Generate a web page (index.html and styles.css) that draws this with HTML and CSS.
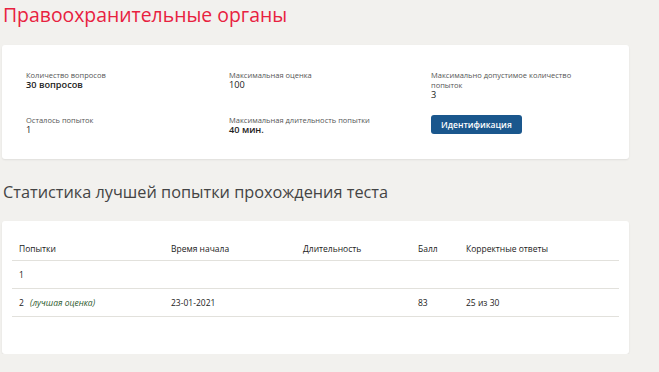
FILE: index.html
```
<!DOCTYPE html>
<html lang="ru">
<head>
    <meta charset="UTF-8">
    <title>Правоохранительные органы</title>
    <link rel="stylesheet" href="styles.css">
</head>
<body>
    <h1 class="page-title">Правоохранительные органы</h1>

    <div class="card info-card">
        <div class="info-grid">
            <div class="info-item">
                <div class="info-label">Количество вопросов</div>
                <div class="info-value bold">30 вопросов</div>
            </div>
            <div class="info-item">
                <div class="info-label">Максимальная оценка</div>
                <div class="info-value">100</div>
            </div>
            <div class="info-item">
                <div class="info-label">Максимально допустимое количество<br>попыток</div>
                <div class="info-value">3</div>
            </div>
            <div class="info-item">
                <div class="info-label">Осталось попыток</div>
                <div class="info-value">1</div>
            </div>
            <div class="info-item">
                <div class="info-label">Максимальная длительность попытки</div>
                <div class="info-value bold">40 мин.</div>
            </div>
            <div class="info-item">
                <button class="btn-primary">Идентификация</button>
            </div>
        </div>
    </div>

    <h2 class="section-title">Статистика лучшей попытки прохождения теста</h2>

    <div class="card table-card">
        <table class="stats">
            <thead>
                <tr>
                    <th class="col-try">Попытки</th>
                    <th class="col-start">Время начала</th>
                    <th class="col-dur">Длительность</th>
                    <th class="col-score">Балл</th>
                    <th>Корректные ответы</th>
                </tr>
            </thead>
            <tbody>
                <tr>
                    <td>1</td>
                    <td></td>
                    <td></td>
                    <td></td>
                    <td></td>
                </tr>
                <tr>
                    <td>2 <span class="best">(лучшая оценка)</span></td>
                    <td>23-01-2021</td>
                    <td></td>
                    <td>83</td>
                    <td>25 из 30</td>
                </tr>
            </tbody>
        </table>
    </div>
</body>
</html>
```

FILE: styles.css
```
body {
    margin: 0;
    padding: 0 30px 0 2px;
    background-color: #f2f1ee;
    font-family: "Open Sans", Arial, sans-serif;
    color: #333;
}
.page-title {
    margin: 0;
    padding: 2px 0 0 1px;
    height: 43px;
    font-size: 19.4px;
    font-weight: 400;
    color: #e8213f;
    line-height: 26px;
}
.card {
    background: #fff;
    border-radius: 3px;
    box-shadow: 0 1px 2px rgba(0,0,0,0.08);
}
.info-card {
    padding: 25px 24px 19px 24px;
    height: 70px;
}
.info-grid {
    display: grid;
    grid-template-columns: 203px 202px 1fr;
    grid-template-rows: 45px 25px;
}
.info-label {
    font-size: 7.5px;
    color: #555;
    line-height: 10px;
}
.info-value {
    font-size: 9.2px;
    line-height: 10px;
    color: #222;
}
.info-value.bold {
    font-weight: 600;
}
.btn-primary {
    display: block;
    margin-top: 0;
    height: 19px;
    padding: 0 10px;
    background: #1a578d;
    color: #fff;
    border: none;
    border-radius: 3px;
    font-family: "Open Sans", Arial, sans-serif;
    font-size: 8.5px;
    font-weight: 600;
}
.section-title {
    margin: 0;
    padding: 22px 0 0 1px;
    height: 40px;
    font-size: 16.3px;
    font-weight: 400;
    color: #444;
    line-height: 22px;
}
.table-card {
    padding: 16px 10px 37px 10px;
}
.stats {
    width: 100%;
    border-collapse: collapse;
    font-size: 8.5px;
    color: #222;
}
.stats th {
    text-align: left;
    font-weight: 400;
    padding: 0 7px;
    height: 23px;
    border-bottom: 1px solid #e2e1dc;
}
.stats td {
    padding: 0 7px;
    height: 27px;
    border-bottom: 1px solid #e2e1dc;
}
.col-try { width: 138px; }
.col-start { width: 118px; }
.col-dur { width: 101px; }
.col-score { width: 34px; }
.best {
    margin-left: 4px;
    font-style: italic;
    color: #2d5a2d;
}
```
